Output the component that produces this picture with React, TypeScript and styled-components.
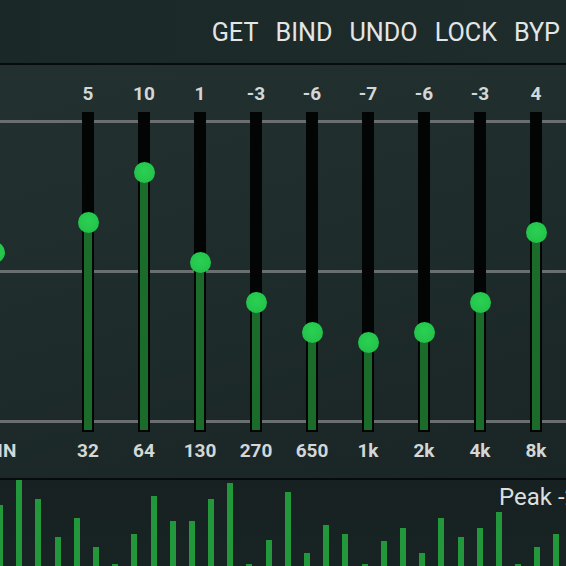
import React from "react";
import styled, { createGlobalStyle } from "styled-components";

const GlobalStyle = createGlobalStyle`
  html, body { margin: 0; padding: 0; background: #1c2828; }
  body { font-family: Roboto, "Noto Sans", sans-serif; }
  #root { width: 566px; height: 566px; overflow: hidden; }
`;

const Screen = styled.div`
  width: 566px;
  height: 566px;
  overflow: hidden;
  display: flex;
  flex-direction: column;
  background: #1d2a2a;
`;

const Header = styled.header`
  flex: none;
  height: 65px;
  box-sizing: border-box;
  display: flex;
  align-items: center;
  justify-content: flex-end;
  gap: 17px;
  padding: 3px 6px 0 0;
  border-bottom: 2px solid #070b0b;
  background: linear-gradient(90deg, #1b2828, #1e2c2c);
`;

const HeaderButton = styled.button`
  background: none;
  border: none;
  padding: 0;
  margin: 0;
  font: 400 25.2px/1 Roboto, sans-serif;
  color: #e3e6e6;
  cursor: pointer;
`;

const EqPanel = styled.section`
  flex: none;
  height: 415px;
  box-sizing: border-box;
  border-bottom: 2px solid #070b0b;
  padding-top: 19px;
  display: flex;
  align-items: flex-start;
  overflow: hidden;
  background:
    linear-gradient(#6a6e6f, #6a6e6f) 0 55px / 100% 3px no-repeat,
    linear-gradient(#6a6e6f, #6a6e6f) 0 205px / 100% 3px no-repeat,
    linear-gradient(#6a6e6f, #6a6e6f) 0 355px / 100% 3px no-repeat,
    linear-gradient(165deg, #223130 0%, #1e2b2b 55%, #1a2525 100%);
`;

const Band = styled.div<{ $preamp?: boolean }>`
  flex: none;
  width: 56px;
  display: flex;
  flex-direction: column;
  align-items: center;
  margin-left: ${(p) => (p.$preamp ? "-34px" : "0")};
  margin-right: ${(p) => (p.$preamp ? "38px" : "0")};
`;

const ValueLabel = styled.div`
  height: 20px;
  font: 700 19px/20px Roboto, sans-serif;
  color: #d3d7d7;
  white-space: nowrap;
`;

const Track = styled.div`
  position: relative;
  margin-top: 8px;
  width: 12px;
  height: 320px;
  box-sizing: border-box;
  padding: 0 2px 2px;
  background: #030505;
  display: flex;
  flex-direction: column;
  justify-content: flex-end;
`;

const Fill = styled.div`
  width: 100%;
  background: #1b6b2b;
`;

const Knob = styled.div`
  position: absolute;
  left: 50%;
  width: 21px;
  height: 21px;
  margin-left: -10.5px;
  border-radius: 50%;
  background: radial-gradient(circle at 50% 42%, #2ad152 0%, #24c44b 65%, #1fb545 100%);
`;

const FreqLabel = styled.div`
  margin-top: 9px;
  height: 20px;
  font: 700 19px/20px Roboto, sans-serif;
  color: #d3d7d7;
  white-space: nowrap;
`;

const Spectrum = styled.section`
  position: relative;
  flex: 1;
  overflow: hidden;
  background: linear-gradient(180deg, #172121, #182323);
`;

const BarRow = styled.div`
  height: 100%;
  display: flex;
  align-items: flex-end;
  gap: 13.2px;
  margin-left: -3px;
`;

const SpecBar = styled.div`
  flex: none;
  width: 6px;
  background: #22983b;
`;

const PeakText = styled.div`
  position: absolute;
  left: 499px;
  top: 5px;
  font: 400 24px/24px Roboto, sans-serif;
  color: #dcdfdf;
  white-space: nowrap;
`;

const bands = [
  { f: "32", v: 5 },
  { f: "64", v: 10 },
  { f: "130", v: 1 },
  { f: "270", v: -3 },
  { f: "650", v: -6 },
  { f: "1k", v: -7 },
  { f: "2k", v: -6 },
  { f: "4k", v: -3 },
  { f: "8k", v: 4 },
];

const spectrum = [
  61, 86, 67, 29, 48, 19, 2, 32, 70, 45, 45, 67, 83, 2, 26, 74, 13, 41, 32, 2,
  25, 38, 13, 48, 29, 38, 54, 2, 19, 32,
];

const Slider: React.FC<{ v: number }> = ({ v }) => {
  const center = 160 - v * 10;
  return (
    <Track>
      <Fill style={{ height: `${318 - center}px` }} />
      <Knob style={{ top: `${center - 10.5}px` }} />
    </Track>
  );
};

export default function App() {
  return (
    <>
      <GlobalStyle />
      <Screen>
        <Header>
          {["GET", "BIND", "UNDO", "LOCK", "BYP"].map((t) => (
            <HeaderButton key={t}>{t}</HeaderButton>
          ))}
        </Header>
        <EqPanel>
          <Band $preamp>
            <ValueLabel />
            <Slider v={2} />
            <FreqLabel>GAIN</FreqLabel>
          </Band>
          {bands.map((b) => (
            <Band key={b.f}>
              <ValueLabel>{b.v}</ValueLabel>
              <Slider v={b.v} />
              <FreqLabel>{b.f}</FreqLabel>
            </Band>
          ))}
        </EqPanel>
        <Spectrum>
          <BarRow>
            {spectrum.map((h, i) => (
              <SpecBar key={i} style={{ height: `${h}px` }} />
            ))}
          </BarRow>
          <PeakText>Peak -2.1 dB</PeakText>
        </Spectrum>
      </Screen>
    </>
  );
}
